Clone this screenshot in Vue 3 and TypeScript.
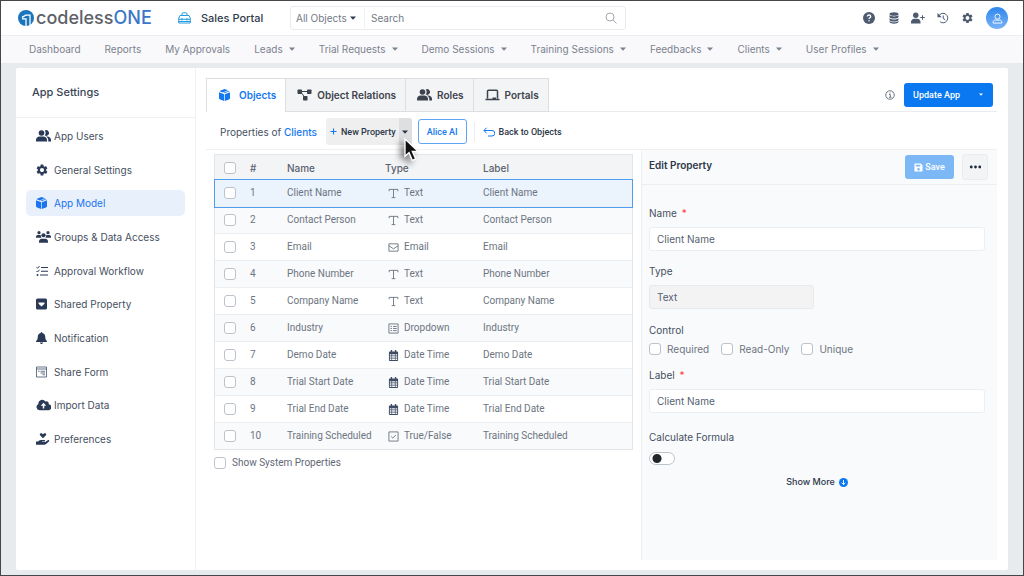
<script setup lang="ts">
import { ref } from 'vue'

interface NavItem { label: string; menu: boolean }
interface SideItem { label: string; icon: string; active?: boolean }
interface Row { name: string; type: string; icon: string }

const nav: NavItem[] = [
  { label: 'Dashboard', menu: false },
  { label: 'Reports', menu: false },
  { label: 'My Approvals', menu: false },
  { label: 'Leads', menu: true },
  { label: 'Trial Requests', menu: true },
  { label: 'Demo Sessions', menu: true },
  { label: 'Training Sessions', menu: true },
  { label: 'Feedbacks', menu: true },
  { label: 'Clients', menu: true },
  { label: 'User Profiles', menu: true },
]

const side: SideItem[] = [
  { label: 'App Users', icon: 'users' },
  { label: 'General Settings', icon: 'gear' },
  { label: 'App Model', icon: 'cube', active: true },
  { label: 'Groups & Data Access', icon: 'group' },
  { label: 'Approval Workflow', icon: 'tasks' },
  { label: 'Shared Property', icon: 'shared' },
  { label: 'Notification', icon: 'bell' },
  { label: 'Share Form', icon: 'form' },
  { label: 'Import Data', icon: 'cloud' },
  { label: 'Preferences', icon: 'hand' },
]

const tabs: SideItem[] = [
  { label: 'Objects', icon: 'cube', active: true },
  { label: 'Object Relations', icon: 'relations' },
  { label: 'Roles', icon: 'users' },
  { label: 'Portals', icon: 'laptop' },
]

const tools = [
  { label: 'Help', icon: 'help' },
  { label: 'Data', icon: 'database' },
  { label: 'Invite user', icon: 'userplus' },
  { label: 'History', icon: 'history' },
  { label: 'Settings', icon: 'gear' },
]

const rows: Row[] = [
  { name: 'Client Name', type: 'Text', icon: 'text' },
  { name: 'Contact Person', type: 'Text', icon: 'text' },
  { name: 'Email', type: 'Email', icon: 'mail' },
  { name: 'Phone Number', type: 'Text', icon: 'text' },
  { name: 'Company Name', type: 'Text', icon: 'text' },
  { name: 'Industry', type: 'Dropdown', icon: 'options' },
  { name: 'Demo Date', type: 'Date Time', icon: 'calendar' },
  { name: 'Trial Start Date', type: 'Date Time', icon: 'calendar' },
  { name: 'Trial End Date', type: 'Date Time', icon: 'calendar' },
  { name: 'Training Scheduled', type: 'True/False', icon: 'check' },
]

const controls = ['Required', 'Read-Only', 'Unique']
const selected = ref(0)
const fieldName = ref('Client Name')
const fieldLabel = ref('Client Name')
</script>

<template>
  <div class="page">
    <svg class="sprite" aria-hidden="true">
      <symbol id="users" viewBox="0 0 30 24" preserveAspectRatio="xMinYMid">
        <circle cx="11" cy="6" r="5.6" />
        <path d="M0 23v-3.500C0 15.500 3.500 13 7 13h8c3.500 0 7 2.500 7 6.500V23z" />
        <path d="M17.500 1.200a5.600 5.600 0 1 1 0 9.600a8 8 0 0 0 0-9.600zM20 13h2.500c4 0 7.500 2.500 7.500 6.500V23h-5.500v-3.500c0-2.600-1.700-5-4.500-6.500z" />
      </symbol>
      <symbol id="gear" viewBox="1.500 1.500 21 21" preserveAspectRatio="xMinYMid">
        <path d="M19.14 12.94c.04-.3.06-.61.06-.94 0-.32-.02-.64-.07-.94l2.03-1.58c.18-.14.23-.41.12-.61l-1.920-3.320c-.12-.22-.37-.29-.59-.22l-2.390.96c-.5-.38-1.030-.7-1.620-.94l-.36-2.540c-.04-.24-.24-.41-.48-.41h-3.840c-.24 0-.43.17-.47.41l-.36 2.540c-.59.24-1.130.57-1.620.94l-2.390-.96c-.22-.08-.47 0-.59.22L2.740 8.870c-.12.21-.08.47.12.61l2.030 1.580c-.05.3-.09.63-.09.94s.02.64.07.94l-2.030 1.580c-.18.14-.23.41-.12.61l1.920 3.320c.12.22.37.29.59.22l2.390-.96c.5.38 1.030.7 1.620.94l.36 2.540c.05.24.24.41.48.41h3.840c.24 0 .44-.17.47-.41l.36-2.540c.59-.24 1.130-.56 1.620-.94l2.390.96c.22.08.47 0 .59-.22l1.920-3.320c.12-.22.07-.47-.12-.61l-2.010-1.580zM12 15.600c-1.980 0-3.600-1.620-3.600-3.600s1.620-3.600 3.600-3.600 3.600 1.620 3.600 3.600-1.620 3.600-3.600 3.600z" />
      </symbol>
      <symbol id="cube" viewBox="0 0 22 24" preserveAspectRatio="xMinYMid">
        <path d="M11 0l7 2.700L7.500 7 1.200 4.700C1.700 3.900 2.300 3.400 3.200 3zM19.500 3.300c.6.400 1 .8 1.300 1.400L11 8.500 9 7.700zM0 6.300l10.300 4V24l-8-2.900C.8 20.500 0 19.500 0 18zM22 6.300V18c0 1.500-.8 2.500-2.300 3.100l-8 2.900V10.300z" />
      </symbol>
      <symbol id="group" viewBox="0 0 30 24" preserveAspectRatio="xMinYMid">
        <circle cx="6" cy="3.300" r="3.200" /><circle cx="24" cy="3.300" r="3.200" /><circle cx="15" cy="8.500" r="4.200" />
        <path d="M0 13.500v-2C0 9 2 7.800 4 7.800h4.500c.6 0 1 .2 1 .8 0 2 .5 3.500 1.800 4.900zM30 13.500v-2c0-2.500-2-3.700-4-3.700h-4.500c-.6 0-1 .2-1 .8 0 2-.5 3.500-1.800 4.900zM6 23.500v-2.500c0-3 2.500-5.500 5.500-5.500h7c3 0 5.500 2.500 5.500 5.500v2.500z" />
      </symbol>
      <symbol id="tasks" viewBox="0 0 24 24" preserveAspectRatio="xMinYMid">
        <path class="ln" d="M10 5h14M10 12.500h14M8 20h16M1 4.500l2 2L7 2M1 12l2 2L7 9.500" /><circle cx="3" cy="20" r="2" />
      </symbol>
      <symbol id="shared" viewBox="0 0 24 24" preserveAspectRatio="xMinYMid">
        <path fill-rule="evenodd" d="M3 1h16a3 3 0 0 1 3 3v16a3 3 0 0 1-3 3H3a3 3 0 0 1-3-3V4a3 3 0 0 1 3-3zM5 9v2.500l6 5.500 6-5.500V9z" />
      </symbol>
      <symbol id="bell" viewBox="1 0 24 24" preserveAspectRatio="xMinYMid">
        <path d="M12 24c1.700 0 3-1.300 3-3H9c0 1.700 1.300 3 3 3zM13.500 2v-.5a1.500 1.500 0 0 0-3 0V2C7 2.700 4.500 5.700 4.500 9.500c0 4-1 6-2.800 8-1.200 1.300-.5 2.300.8 2.300h19c1.300 0 2-1 .8-2.300-1.800-2-2.800-4-2.800-8 0-3.800-2.500-6.800-6-7.500z" />
      </symbol>
      <symbol id="form" viewBox="0 0 24 24" preserveAspectRatio="xMinYMid">
        <path class="th" d="M1 2h20v20H1zM1 6h20" /><path class="th" d="M4 10.500h3M9 10.500h9M9 14h9M13 17.500h5" />
      </symbol>
      <symbol id="cloud" viewBox="0 0 30 24" preserveAspectRatio="xMinYMid">
        <path fill-rule="evenodd" d="M25.200 10.500a4.500 4.500 0 0 0-6.500-5.300A7.500 7.500 0 0 0 4.800 9.800 6.700 6.700 0 0 0 7 22.500h17a6 6 0 0 0 1.200-12zM13.500 19v-5.500H9.500L15 7.500l5.500 6h-4V19z" />
      </symbol>
      <symbol id="hand" viewBox="0 0 28 24" preserveAspectRatio="xMinYMid">
        <path d="M14 10.500L8.500 5.200C6 2.500 9-1.200 12 1l2 1.500L16 1c3-2.200 6 1.500 3.500 4.200zM0 17h4l2.500-2c1-.8 2-1.200 3.500-1.200h6.500c2.500 0 2.500 3.200 0 3.200H12v1.200h6.500l5-3.800c2-1.500 4.200.8 2.500 2.500l-6 5.300c-1 .8-1.800 1.300-3 1.300H0z" />
      </symbol>
      <symbol id="relations" viewBox="0 0 28 24">
        <path class="ln" d="M7 5h14M7 6l8 12" />
        <rect x="0" y="1" width="9" height="9" rx="1.500" /><rect x="19" y="1" width="9" height="9" rx="1.500" /><rect x="11" y="14" width="9" height="9" rx="1.500" />
      </symbol>
      <symbol id="laptop" viewBox="0 0 28 24">
        <path class="lt" d="M4 19V4.500C4 3 4.500 2.500 6 2.500h16c1.500 0 2 .5 2 2V19M0 21h28" /><path d="M14 17h7v4h-7z" />
      </symbol>
      <symbol id="help" viewBox="0 0 24 24">
        <circle cx="12" cy="12" r="12" /><path class="wh" d="M8.500 9c.3-2 1.700-3 3.500-3s3.500 1.100 3.500 3c0 2.500-3.500 2.500-3.500 5" /><circle cx="12" cy="17.600" r="1.500" fill="#fff" />
      </symbol>
      <symbol id="database" viewBox="0 0 24 24">
        <ellipse cx="12" cy="4" rx="9" ry="3.500" /><path d="M3 6.500c4 3 14 3 18 0V10c-2 4-16 4-18 0zM3 12.500c4 3.500 14 3.500 18 0V16c-2 4-16 4-18 0zM3 18c4 3.500 14 3.500 18 0v2c-2 4.500-16 4.500-18 0z" />
      </symbol>
      <symbol id="userplus" viewBox="0 0 28 24">
        <circle cx="9.500" cy="6.500" r="5.500" /><path d="M0 23v-3c0-4 3-6.500 6.500-6.500h6c3.500 0 6.500 2.500 6.500 6.500v3z" /><path class="ln" d="M23 6.500v9M18.500 11h9" />
      </symbol>
      <symbol id="history" viewBox="0 0 24 24">
        <path class="ln" d="M4 7a9.500 9.500 0 1 1 2 12.500M12.500 7v6l4 2.500" /><path d="M1 2v8.500h8.500z" />
      </symbol>
      <symbol id="text" viewBox="0 0 24 24">
        <path class="ln" d="M2.500 7V3h19v4M12 3v18M8 21h8" />
      </symbol>
      <symbol id="mail" viewBox="0 0 24 24">
        <path class="ln" d="M2 4h20v16H2zM2 8l10 7 10-7" />
      </symbol>
      <symbol id="options" viewBox="0 0 24 24">
        <path class="ln" d="M2 2h20v20H2z" /><path class="ln" d="M5.500 7.500h3M11 7.500h8M5.500 12h3M11 12h8M5.500 16.500h3M11 16.500h8" />
      </symbol>
      <symbol id="calendar" viewBox="0 0 24 24">
        <path fill-rule="evenodd" d="M6 0h3v3h6V0h3v3h2a2 2 0 0 1 2 2v17a2 2 0 0 1-2 2H4a2 2 0 0 1-2-2V5a2 2 0 0 1 2-2h2zM4 9v3h3.500V9zm5 0v3h6V9zm7.500 0v3H20V9zM4 13.500V17h3.500v-3.500zm5 0V17h6v-3.500zm7.500 0V17H20v-3.500zM4 18.500V22h3.500v-3.500zm5 0V22h6v-3.500zm7.500 0V22H20v-3.500z" />
      </symbol>
      <symbol id="check" viewBox="0 0 24 24">
        <path class="ln" d="M2 2h20v20H2zM7 12l3.500 3.500L17 9" />
      </symbol>
      <symbol id="caret" viewBox="0 0 12 8"><path d="M0 1h12L6 7.500z" /></symbol>
    </svg>

    <header class="top">
      <a href="#" class="logo" aria-label="codelessONE">
        <svg class="mark" viewBox="0 0 32 32" aria-hidden="true">
          <circle cx="16" cy="16" r="16" fill="#1b75bc" />
          <path d="M16 33V17.500H9.500V13c3 0 4.500-1 5.500-3h9v23" fill="none" stroke="#fff" stroke-width="2.500" />
        </svg>
        <span class="word">codeless<b>ONE</b></span>
      </a>
      <a href="#" class="portal">
        <svg class="case" viewBox="0 0 26 24" aria-hidden="true">
          <path d="M8 7V4c0-1.500.7-2.500 2.500-2.500h5C17.300 1.500 18 2.500 18 4v3M4 7h18l2.500 5v10h-23V12zM1.500 14.500h23M8 12v5M18 12v5M1.500 19h23" />
        </svg>
        Sales Portal
      </a>
      <form class="search" role="search" @submit.prevent>
        <span class="pick">
          <select aria-label="Object"><option>All Objects</option></select>
          <svg class="caret" aria-hidden="true"><use href="#caret" /></svg>
        </span>
        <input type="search" placeholder="Search" aria-label="Search" />
        <button type="submit" aria-label="Search">
          <svg class="glass" viewBox="0 0 24 24" aria-hidden="true"><circle cx="10" cy="10" r="8" /><path d="M16 16l7 7" /></svg>
        </button>
      </form>
      <div class="tools">
        <button v-for="t in tools" :key="t.icon" type="button" :aria-label="t.label">
          <svg :class="['tool', t.icon]" aria-hidden="true"><use :href="'#' + t.icon" /></svg>
        </button>
      </div>
      <button type="button" class="avatar" aria-label="Account">
        <svg viewBox="0 0 24 24" aria-hidden="true"><circle cx="12" cy="8" r="5.500" /><path d="M2.500 22v-2c0-3 2-4.500 4.500-4.500h10c2.500 0 4.500 1.500 4.500 4.500v2z" /></svg>
      </button>
    </header>

    <nav class="nav" aria-label="Main">
      <template v-for="n in nav" :key="n.label">
        <button v-if="n.menu" type="button">{{ n.label }}<svg class="caret" aria-hidden="true"><use href="#caret" /></svg></button>
        <a v-else href="#">{{ n.label }}</a>
      </template>
    </nav>

    <div class="card">
      <aside class="side">
        <h1>App Settings</h1>
        <ul>
          <li v-for="s in side" :key="s.label">
            <a href="#" :class="{ active: s.active }">
              <svg class="icon" aria-hidden="true"><use :href="'#' + s.icon" /></svg>{{ s.label }}
            </a>
          </li>
        </ul>
      </aside>

      <main class="main">
        <div class="tabbar">
          <div class="tabs" role="tablist">
            <button v-for="t in tabs" :key="t.label" type="button" role="tab" :aria-selected="!!t.active" :class="{ active: t.active }">
              <svg class="icon" aria-hidden="true"><use :href="'#' + t.icon" /></svg>{{ t.label }}
            </button>
          </div>
          <div class="update">
            <svg class="info" viewBox="0 0 20 20" aria-hidden="true"><circle cx="10" cy="10" r="8.500" /><path d="M8 9h2.500v5M8 14.500h5M10 5v2" /></svg>
            <div class="split">
              <button type="button">Update App</button>
              <button type="button" class="drop" aria-label="More update options"><svg class="caret small" aria-hidden="true"><use href="#caret" /></svg></button>
            </div>
          </div>
        </div>

        <div class="bar">
          <h2>Properties of <a href="#">Clients</a></h2>
          <div class="new">
            <button type="button"><svg class="plus" viewBox="0 0 16 16" aria-hidden="true"><path d="M8 1v14M1 8h14" /></svg>New Property</button>
            <button type="button" class="drop" aria-label="More property options"><svg class="caret" aria-hidden="true"><use href="#caret" /></svg></button>
            <svg class="cursor" viewBox="0 0 24 36" aria-hidden="true"><path d="M1.500 1.500v26l6-5.500 5 11.500 5-2.200-5-11.300h8.500z" /></svg>
          </div>
          <button type="button" class="alice">Alice AI</button>
          <a href="#" class="back">
            <svg viewBox="0 0 24 20" aria-hidden="true"><path d="M7 1.500L2 7l5 5.500M2 7h16a5 5 0 0 1 0 11h-8" /></svg>Back to Objects
          </a>
        </div>

        <div class="body">
          <section class="records">
            <table>
              <colgroup><col class="c1" /><col class="c2" /><col class="c3" /><col class="c4" /><col /></colgroup>
              <thead>
                <tr>
                  <th><input type="checkbox" aria-label="Select all" /></th>
                  <th>#</th><th>Name</th><th>Type</th><th>Label</th>
                </tr>
              </thead>
              <tbody>
                <tr v-for="(r, i) in rows" :key="r.name" :class="{ sel: i === selected }" @click="selected = i">
                  <td><input type="checkbox" :aria-label="'Select ' + r.name" /></td>
                  <td>{{ i + 1 }}</td>
                  <td>{{ r.name }}</td>
                  <td><span class="type"><svg :class="r.icon" aria-hidden="true"><use :href="'#' + r.icon" /></svg>{{ r.type }}</span></td>
                  <td>{{ r.name }}</td>
                </tr>
              </tbody>
            </table>
            <label class="system"><input type="checkbox" />Show System Properties</label>
          </section>

          <section class="panel">
            <header>
              <h2>Edit Property</h2>
              <button type="button" class="save">
                <svg viewBox="0 0 20 20" aria-hidden="true"><path fill-rule="evenodd" d="M3 1h12l4 4v12a2 2 0 0 1-2 2H3a2 2 0 0 1-2-2V3a2 2 0 0 1 2-2zM4 4v4h10V4zM10 11a3 3 0 1 0 0 6 3 3 0 0 0 0-6z" /></svg>Save
              </button>
              <button type="button" class="more" aria-label="More actions">
                <svg viewBox="0 0 24 8" aria-hidden="true"><circle cx="3.500" cy="4" r="2.800" /><circle cx="12" cy="4" r="2.800" /><circle cx="20.500" cy="4" r="2.800" /></svg>
              </button>
            </header>
            <form @submit.prevent>
              <div class="field">
                <label for="f-name">Name <em>*</em></label>
                <input id="f-name" v-model="fieldName" type="text" />
              </div>
              <div class="field">
                <label for="f-type">Type</label>
                <input id="f-type" class="half" type="text" value="Text" disabled />
              </div>
              <fieldset>
                <legend>Control</legend>
                <div class="checks">
                  <label v-for="c in controls" :key="c"><input type="checkbox" />{{ c }}</label>
                </div>
              </fieldset>
              <div class="field last">
                <label for="f-label">Label <em>*</em></label>
                <input id="f-label" v-model="fieldLabel" type="text" />
              </div>
              <div class="formula">
                <label for="f-calc">Calculate Formula</label>
                <input id="f-calc" type="checkbox" role="switch" class="switch" />
              </div>
              <button type="button" class="showmore">
                Show More
                <svg viewBox="0 0 20 20" aria-hidden="true"><circle cx="10" cy="10" r="10" fill="#0a78f0" stroke="none" /><path d="M10 4.500v10M5.800 10.500L10 14.700l4.200-4.200" /></svg>
              </button>
            </form>
          </section>
        </div>
      </main>
    </div>
  </div>
</template>

<style>
html, body { margin: 0; background: #e8ebee; }
</style>

<style scoped>
* { box-sizing: border-box; }
.page {
  min-height: 100vh; display: flex; flex-direction: column;
  border: 1px solid #44464a; background: #e8ebee; color: #454f60;
  font: 10px/14px Inter, "Liberation Sans", sans-serif;
}
button, input, select { font: inherit; color: inherit; margin: 0; }
button { border: 0; padding: 0; background: none; display: inline-flex; align-items: center; justify-content: center; white-space: nowrap; }
a { color: inherit; text-decoration: none; }
h1, h2, ul { margin: 0; padding: 0; font-weight: 400; list-style: none; }
svg { flex: none; fill: currentColor; }
.sprite { position: absolute; width: 0; height: 0; }
.ln { fill: none; stroke: currentColor; stroke-width: 2; }
.lt { fill: none; stroke: currentColor; stroke-width: 3; }
.th { fill: none; stroke: currentColor; stroke-width: 1.400; }
.wh { fill: none; stroke: #fff; stroke-width: 2.600; }
.caret { width: 6px; height: 4px; }
.caret.small { width: 4px; height: 3px; }
.icon { width: 15px; height: 12px; }
input[type="checkbox"] {
  appearance: none; display: block; flex: none; width: 12px; height: 12px;
  border: 1px solid #bdc3ca; border-radius: 3px; background: #fff;
}

.top { display: flex; align-items: center; height: 35px; padding: 0 15px 0 17px; background: #fff; border-bottom: 1px solid #ebedf0; }
.logo { display: flex; align-items: center; gap: 2px; width: 160px; }
.mark { width: 16px; height: 16px; }
.word { font: 500 18px/22px Inter, sans-serif; color: #5d6167; }
.word b { font-weight: 500; color: #3b76c8; }
.portal { display: flex; align-items: center; gap: 10px; width: 112px; font-size: 11px; font-weight: 500; color: #2f3a4c; white-space: nowrap; }
.case { width: 13px; height: 12px; fill: none; stroke: #259be0; stroke-width: 2; }
.search { display: flex; align-items: center; flex: 0 1 336px; height: 24px; border: 1px solid #e9ebee; border-radius: 3px; }
.pick { display: flex; align-items: center; width: 74px; height: 20px; padding: 0 8px 0 5px; border-right: 1px solid #eff0f2; color: #2f3a4c; }
.pick select { appearance: none; flex: 1; min-width: 0; border: 0; padding: 0; background: none; color: #737a85; }
.search input { appearance: none; flex: 1; min-width: 0; border: 0; padding: 0 6px; background: none; }
.search input::placeholder { color: #737a85; opacity: 1; }
.search > button { width: 28px; height: 22px; }
.glass { width: 12px; height: 12px; fill: none; stroke: #a5abb3; stroke-width: 2; }
.tools { display: flex; justify-content: space-between; width: 112px; margin-left: auto; color: #4d5a70; }
.tools button { width: 14px; }
.tool { width: 14px; height: 12px; }
.tool.gear { width: 11px; }
.avatar { width: 22px; height: 22px; margin-left: 12px; border-radius: 50%; background: linear-gradient(#2f86ee, #78b4f5); }
.avatar svg { width: 11px; height: 11px; fill: none; stroke: #fff; stroke-width: 2; }

.nav { display: flex; align-items: center; gap: 24px; height: 27px; padding: 0 28px 1px; background: #f9f9fb; color: #7b828e; white-space: nowrap; }
.nav button { gap: 6px; }

.card { display: flex; flex: 1; margin: 5px 15px; background: #fff; border-radius: 2px; }
.side { flex: none; width: 180px; border-right: 1px solid #eef0f2; }
.side h1 { height: 50px; padding-left: 16px; font-size: 11px; font-weight: 500; line-height: 49px; border-bottom: 1px solid #eef0f2; color: #3a4455; }
.side ul { display: flex; flex-direction: column; justify-content: space-between; min-height: 329px; margin: 5px 10px 0; }
.side a { display: flex; align-items: center; gap: 3px; height: 26px; padding-left: 10px; border-radius: 5px; white-space: nowrap; }
.side a .icon { color: #2a3956; }
.side a.active { background: #e8f1fb; color: #1a73f0; }
.side a.active .icon { color: #1a73f0; }

.main { flex: 1; min-width: 0; display: flex; flex-direction: column; padding: 10px 11px 10px 10px; }
.tabbar { display: flex; justify-content: space-between; height: 34px; border-bottom: 1px solid #e9ebee; }
.tabs { display: flex; height: 34px; border: 1px solid #dcdee1; border-bottom: 0; }
.tabs button { gap: 5px; padding: 0 9px 0 11px; background: #f3f4f6; border-bottom: 1px solid #dcdee1; font-weight: 600; color: #3d434c; }
.tabs button + button { border-left: 1px solid #dcdee1; }
.tabs button.active { padding-left: 12px; background: #fff; border-bottom-color: #fff; color: #1478f0; }
.update { display: flex; align-items: center; gap: 9px; padding: 0 4px 0 0; }
.info { width: 10px; height: 10px; fill: none; stroke: #6d7580; stroke-width: 2; }
.split, .new, .alice, .back, .save { font: 500 9px/14px Roboto, Inter, sans-serif; }
.split { display: flex; height: 24px; border-radius: 3px; background: #0a78f0; color: #fff; }
.split button { padding-left: 9px; }
.split .drop { width: 33px; padding: 0 0 0 9px; }

.bar { display: flex; align-items: center; height: 38px; padding: 2px 0 0 14px; border-bottom: 1px solid #eef0f2; white-space: nowrap; }
.bar h2 { font-size: 10px; }
.bar h2 a { color: #1478f0; font-weight: 500; }
.new { position: relative; display: flex; height: 27px; margin-left: 9px; border-radius: 3px; background: #efefef; color: #2d3748; }
.new button { gap: 4px; padding: 0 3px 0 4px; }
.new .drop { width: 13px; padding: 0; background: #dedfe0; border-radius: 0 3px 3px 0; }
.plus { width: 7px; height: 7px; fill: none; stroke: #1478f0; stroke-width: 2.500; }
.cursor { position: absolute; z-index: 2; right: -8px; top: 20px; width: 16px; height: 24px; fill: #111; stroke: #fff; stroke-width: 2; filter: drop-shadow(-4px 3px 3px rgba(0, 0, 0, .5)); }
.alice { height: 25px; padding: 0 8px; margin-left: 6px; border: 1px solid #5ea5f5; border-radius: 3px; color: #1478f0; }
.back { display: flex; align-items: center; gap: 4px; height: 20px; margin-left: 7px; padding-left: 8px; border-left: 1px solid #eceef0; color: #2d3748; }
.back svg { width: 12px; height: 10px; fill: none; stroke: #1478f0; stroke-width: 2; }

.body { display: flex; flex: 1; }
.records { flex: 1; min-width: 0; padding: 4px 8px 0; }
table { width: 100%; table-layout: fixed; border-collapse: separate; border-spacing: 0; border: 1px solid #e3e6e9; color: #6d7581; }
.c1 { width: 29px; }
.c2 { width: 37px; }
.c3 { width: 98px; }
.c4 { width: 98px; }
th, td { height: 27px; padding: 0 0 0 6px; text-align: left; white-space: nowrap; border-bottom: 1px solid #eceff2; }
td, .system { font-family: Roboto, Inter, sans-serif; }
th { height: 25px; font-weight: 500; background: #f3f4f6; border-bottom: 0; color: #5b6370; }
th:first-child, td:first-child { padding-left: 9px; }
tbody tr:nth-child(even) { background: #f9fafc; }
tbody tr:last-child td { height: 26px; border-bottom: 0; }
tbody tr.sel { background: #ebf3fd; outline: 1px solid #4f9df0; }
.type { display: flex; align-items: center; gap: 5px; padding-left: 3px; }
.type svg { width: 11px; height: 11px; }
.type .calendar { color: #3f4c63; }
.system { display: flex; align-items: center; gap: 6px; margin-top: 6px; color: #5f6875; }

.panel { flex: 0 0 45%; background: #f9fafc; border-left: 1px solid #eceef1; border-top: 0; }
.panel header { display: flex; align-items: center; height: 35px; padding: 0 9px 0 7px; border-bottom: 1px solid #eceef1; }
.panel h2 { flex: 1; margin-bottom: 4px; font-size: 10px; font-weight: 600; color: #2d3748; }
.save { gap: 2px; width: 49px; height: 24px; border-radius: 3px; background: #7db8f6; color: #fff; }
.save svg { width: 9px; height: 9px; }
.more { width: 26px; height: 26px; margin-left: 8px; border: 1px solid #ebecee; border-radius: 3px; background: #f3f4f6; color: #1f2a3c; }
.more svg { width: 13px; height: 4px; }
.panel form { display: flex; flex-direction: column; padding: 21px 12px 0 7px; }
.field { display: flex; flex-direction: column; gap: 7px; margin-bottom: 13px; }
.field.last { margin-bottom: 17px; }
.field em { margin-left: 2px; font-style: normal; color: #ff3b3b; }
.field input { width: 100%; height: 24px; padding: 0 7px; border: 1px solid #eceef1; border-radius: 3px; background: #fff; color: #555f6f; }
.field input.half { width: 49%; background: #f3f3f4; border-color: #e8e9eb; }
fieldset { min-width: 0; margin: 1px 0 13px; padding: 0; border: 0; }
legend { padding: 0; }
.checks { display: flex; gap: 12px; margin-top: 6px; line-height: 12px; color: #6d7581; }
.checks label { display: flex; align-items: center; gap: 6px; }
.formula { display: flex; flex-direction: column; align-items: flex-start; gap: 8px; }
input.switch { width: 26px; height: 13px; border-radius: 7px; background: radial-gradient(circle at 7px 50%, #22262b 0 4px, #fff 5px); }
.showmore { align-self: center; gap: 4px; margin-top: 10px; font-size: 9px; font-weight: 500; color: #2d3748; }
.showmore svg { width: 9px; height: 9px; fill: none; stroke: #fff; stroke-width: 2; }
</style>
